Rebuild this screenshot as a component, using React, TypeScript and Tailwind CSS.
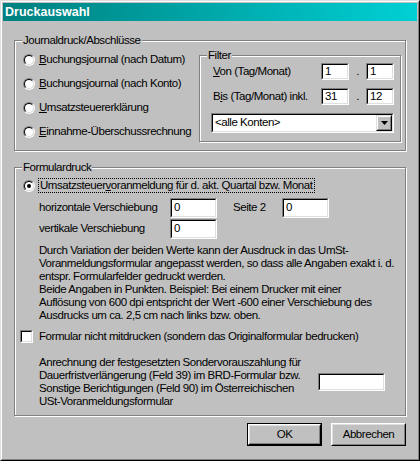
import React from 'react';

const sunkenOuter = 'border border-t-[#808080] border-l-[#808080] border-r-white border-b-white';
const sunkenInner = 'border border-t-black border-l-black border-r-[#dfdfdf] border-b-[#dfdfdf] bg-white';

const Radio: React.FC<{ checked?: boolean }> = ({ checked }) => (
    <span className="w-[12px] h-[12px] shrink-0 rounded-full flex border border-t-[#808080] border-l-[#808080] border-r-white border-b-white">
        <span className="flex-1 rounded-full flex items-center justify-center border border-t-black border-l-black border-r-[#dfdfdf] border-b-[#dfdfdf] bg-white">
            {checked && <span className="w-[4px] h-[4px] rounded-full bg-black"></span>}
        </span>
    </span>
);

const Field: React.FC<{ value?: string; className: string }> = ({ value, className }) => (
    <div className={`${sunkenOuter} flex ${className}`}>
        <div className={`${sunkenInner} flex-1 flex items-center pl-[2px] leading-none`}>{value}</div>
    </div>
);

const Group: React.FC<{ label: string; className: string; children?: React.ReactNode }> = ({ label, className, children }) => (
    <div className={`relative border border-[#808080] shadow-[inset_1px_1px_0_#ffffff,1px_1px_0_#ffffff] ${className}`}>
        <span className="absolute left-[7px] top-[-8px] bg-[#c0c0c0] px-[1px] leading-[14px]">{label}</span>
        {children}
    </div>
);

const Button: React.FC<{ label: string; isDefault?: boolean }> = ({ label, isDefault }) => (
    <div className={`w-[75px] h-[23px] flex ${isDefault ? 'border border-black' : ''}`}>
        <div className="flex-1 flex border border-t-white border-l-white border-r-black border-b-black">
            <div className="flex-1 flex items-center justify-center border border-t-[#dfdfdf] border-l-[#dfdfdf] border-r-[#808080] border-b-[#808080]">
                {label}
            </div>
        </div>
    </div>
);

const RadioRow: React.FC<{ children: React.ReactNode }> = ({ children }) => (
    <div className="h-[24px] flex items-center gap-[4px]">
        <Radio />
        <span>{children}</span>
    </div>
);

const hinweis = [
    'Durch Variation der beiden Werte kann der Ausdruck in das UmSt-',
    'Voranmeldungsformular angepasst werden, so dass alle Angaben exakt i. d.',
    'entspr. Formularfelder gedruckt werden.',
    'Beide Angaben in Punkten. Beispiel: Bei einem Drucker mit einer',
    'Auflösung von 600 dpi entspricht der Wert -600 einer Verschiebung des',
    'Ausdrucks um ca. 2,5 cm nach links bzw. oben.',
];

const anrechnung = [
    'Anrechnung der festgesetzten Sondervorauszahlung für',
    'Dauerfristverlängerung (Feld 39) im BRD-Formular bzw.',
    'Sonstige Berichtigungen (Feld 90) im Österreichischen',
    'USt-Voranmeldungsformular',
];

const App: React.FC = () => {
    return (
        <div className="w-[420px] h-[461px] bg-[#c0c0c0] text-black text-[11.5px] tracking-[-0.45px] font-['Liberation_Sans',Arial,sans-serif] border border-t-[#dfdfdf] border-l-[#dfdfdf] border-r-black border-b-black">
            <div className="h-full flex flex-col p-[1px] border border-t-white border-l-white border-r-[#808080] border-b-[#808080]">
                <div className="h-[18px] shrink-0 flex items-center pl-[2px] bg-gradient-to-r from-[#008080] to-[#00d0d4] text-white font-bold text-[12.5px] tracking-normal">
                    Druckauswahl
                </div>

                <div className="flex-1 flex flex-col px-[11px] pt-[19px]">
                    {/* Journaldruck */}
                    <Group label="Journaldruck/Abschlüsse" className="h-[111px] flex items-start">
                        <div className="flex-1 flex flex-col pl-[8px] pt-[7px]">
                            <RadioRow><u>B</u>uchungsjournal (nach Datum)</RadioRow>
                            <RadioRow><u>B</u>uchungsjournal (nach Konto)</RadioRow>
                            <RadioRow><u>U</u>msatzsteuererklärung</RadioRow>
                            <RadioRow><u>E</u>innahme-Überschussrechnung</RadioRow>
                        </div>
                        <Group label="Filter" className="w-[202px] h-[87px] mt-[14px] mr-[4px] shrink-0">
                            <div className="flex flex-col pt-[7px]">
                                <div className="h-[17px] flex items-center pl-[13px]">
                                    <span className="w-[108px]"><u>V</u>on (Tag/Monat)</span>
                                    <Field value="1" className="w-[28px] h-[17px]" />
                                    <span className="w-[17px] text-center">.</span>
                                    <Field value="1" className="w-[28px] h-[17px]" />
                                </div>
                                <div className="h-[17px] mt-[8px] flex items-center pl-[13px]">
                                    <span className="w-[108px]">B<u>i</u>s (Tag/Monat) inkl.</span>
                                    <Field value="31" className="w-[28px] h-[17px]" />
                                    <span className="w-[17px] text-center">.</span>
                                    <Field value="12" className="w-[28px] h-[17px]" />
                                </div>
                                <div className="ml-[11px] mt-[8px] w-[183px] h-[20px] flex border border-t-[#808080] border-l-[#808080] border-r-white border-b-white">
                                    <div className={`${sunkenInner} flex-1 flex items-center justify-between`}>
                                        <span className="pl-[2px]">&lt;alle Konten&gt;</span>
                                        <div className="w-[16px] h-[16px] flex border border-t-[#dfdfdf] border-l-[#dfdfdf] border-r-black border-b-black bg-[#c0c0c0]">
                                            <div className="flex-1 flex items-center justify-center border border-t-white border-l-white border-r-[#808080] border-b-[#808080]">
                                                <svg width="7" height="4" viewBox="0 0 7 4">
                                                    <polygon points="0,0 7,0 3.5,4" fill="black" />
                                                </svg>
                                            </div>
                                        </div>
                                    </div>
                                </div>
                            </div>
                        </Group>
                    </Group>

                    {/* Formulardruck */}
                    <Group label="Formulardruck" className="h-[249px] mt-[16px]">
                        <div className="flex flex-col pt-[10px]">
                            <div className="h-[15px] flex items-center pl-[8px] gap-[3px]">
                                <Radio checked />
                                <span className="h-[15px] flex items-center px-[1px] border border-dotted border-black">
                                    Umsatzsteuer<u>v</u>oranmeldung für d. akt. Quartal bzw. Monat
                                </span>
                            </div>
                            <div className="h-[20px] mt-[5px] flex items-center pl-[24px]">
                                <span className="w-[131px]">horizontale Verschiebung</span>
                                <Field value="0" className="w-[47px] h-[20px]" />
                                <span className="w-[65px] pl-[16px]">Seite 2</span>
                                <Field value="0" className="w-[47px] h-[20px]" />
                            </div>
                            <div className="h-[20px] mt-[1px] flex items-center pl-[24px]">
                                <span className="w-[131px]">vertikale Verschiebung</span>
                                <Field value="0" className="w-[47px] h-[20px]" />
                            </div>
                            <div className="mt-[5px] pl-[24px] leading-[13px] whitespace-nowrap">
                                {hinweis.map((line) => (
                                    <div key={line}>{line}</div>
                                ))}
                            </div>
                            <div className="h-[13px] mt-[8px] flex items-center pl-[5px] gap-[6px]">
                                <div className={`${sunkenOuter} w-[13px] h-[13px] flex`}>
                                    <div className={`${sunkenInner} flex-1`}></div>
                                </div>
                                <span>Formular nicht mitdrucken (sondern das Originalformular bedrucken)</span>
                            </div>
                            <div className="mt-[13px] flex items-center pl-[24px]">
                                <div className="w-[279px] leading-[13px] whitespace-nowrap">
                                    {anrechnung.map((line) => (
                                        <div key={line}>{line}</div>
                                    ))}
                                </div>
                                <Field className="w-[67px] h-[18px]" />
                            </div>
                        </div>
                    </Group>

                    <div className="mt-[7px] flex justify-end gap-[9px]">
                        <Button label="OK" isDefault />
                        <Button label="Abbrechen" />
                    </div>
                </div>
            </div>
        </div>
    );
};

export default App;
